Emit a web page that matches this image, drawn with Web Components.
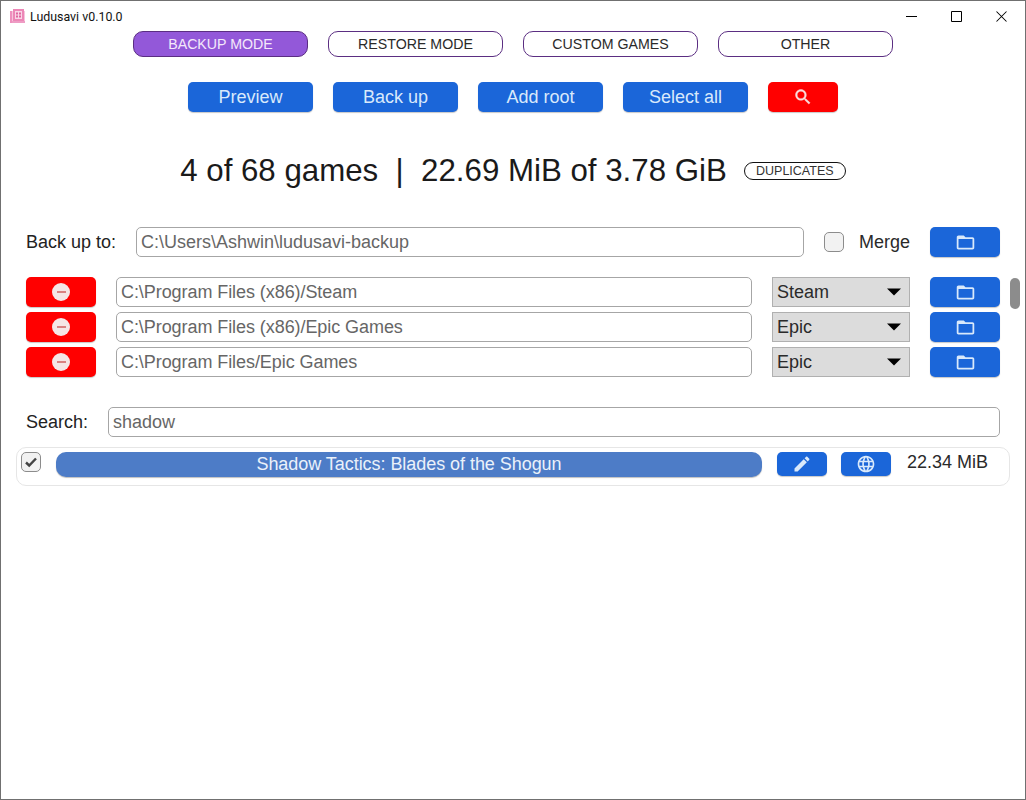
<!DOCTYPE html>
<html>
<head>
<meta charset="utf-8">
<title>Ludusavi</title>
<style>
html, body { margin: 0; padding: 0; background: #fff; }
</style>
</head>
<body>
<ls-window>
    <ls-titlebar>Ludusavi v0.10.0</ls-titlebar>
    <ls-row class="modes" gap="20" center>
        <ls-mode active>BACKUP MODE</ls-mode>
        <ls-mode>RESTORE MODE</ls-mode>
        <ls-mode>CUSTOM GAMES</ls-mode>
        <ls-mode>OTHER</ls-mode>
    </ls-row>
    <ls-row gap="20" center top="25">
        <ls-button width="125">Preview</ls-button>
        <ls-button width="125">Back up</ls-button>
        <ls-button width="125">Add root</ls-button>
        <ls-button width="125">Select all</ls-button>
        <ls-button width="70" color="red"><ls-icon name="search" size="20"></ls-icon></ls-button>
    </ls-row>
    <ls-summary top="39">4 of 68 games &nbsp;|&nbsp; 22.69 MiB of 3.78 GiB</ls-summary>
    <ls-row gap="20" top="36" pad="25">
        <ls-label width="90">Back up to:</ls-label>
        <ls-field grow>C:\Users\Ashwin\ludusavi-backup</ls-field>
        <ls-check>Merge</ls-check>
        <ls-button width="70"><ls-icon name="folder" size="21"></ls-icon></ls-button>
    </ls-row>
    <ls-roots>
        <ls-root-row kind="Steam">C:\Program Files (x86)/Steam</ls-root-row>
        <ls-root-row kind="Epic">C:\Program Files (x86)/Epic Games</ls-root-row>
        <ls-root-row kind="Epic">C:\Program Files/Epic Games</ls-root-row>
    </ls-roots>
    <ls-row gap="20" top="30" pad="25">
        <ls-label width="62">Search:</ls-label>
        <ls-field grow>shadow</ls-field>
    </ls-row>
    <ls-game size="22.34 MiB">Shadow Tactics: Blades of the Shogun</ls-game>
</ls-window>

<script>
const FONT = '"Liberation Sans", Arial, sans-serif';

const ICONS = {
    search: "M15.5 14h-.79l-.28-.27C15.41 12.59 16 11.11 16 9.5 16 5.91 13.09 3 9.5 3S3 5.91 3 9.5 5.91 16 9.5 16c1.61 0 3.09-.59 4.23-1.57l.27.28v.79l5 4.99L20.49 19l-4.99-5zm-6 0C7.01 14 5 11.99 5 9.5S7.01 5 9.5 5 14 7.01 14 9.5 11.99 14 9.5 14z",
    folder: "M20 6h-8l-2-2H4c-1.1 0-1.99.9-1.99 2L2 18c0 1.1.9 2 2 2h16c1.1 0 2-.9 2-2V8c0-1.1-.9-2-2-2zm0 12H4V8h16v10z",
    edit: "M3 17.25V21h3.75L17.81 9.94l-3.75-3.75L3 17.25zM20.71 7.04c.39-.39.39-1.02 0-1.41l-2.34-2.34c-.39-.39-1.02-.39-1.41 0l-1.83 1.83 3.75 3.75 1.83-1.83z",
    globe: "M11.99 2C6.47 2 2 6.48 2 12s4.47 10 9.99 10C17.52 22 22 17.52 22 12S17.52 2 11.99 2zm6.93 6h-2.95c-.32-1.25-.78-2.45-1.38-3.56 1.84.63 3.37 1.91 4.33 3.56zM12 4.04c.83 1.2 1.48 2.53 1.91 3.96h-3.82c.43-1.43 1.08-2.76 1.91-3.96zM4.26 14C4.1 13.36 4 12.69 4 12s.1-1.36.26-2h3.38c-.08.66-.14 1.32-.14 2 0 .68.06 1.34.14 2H4.26zm.82 2h2.95c.32 1.25.78 2.45 1.38 3.56-1.84-.63-3.37-1.9-4.33-3.56zm2.95-8H5.08c.96-1.66 2.49-2.93 4.33-3.56C8.81 5.55 8.35 6.75 8.03 8zM12 19.96c-.83-1.2-1.48-2.53-1.91-3.96h3.82c-.43 1.43-1.08 2.76-1.91 3.96zM14.34 14H9.66c-.09-.66-.16-1.32-.16-2 0-.68.07-1.35.16-2h4.68c.09.65.16 1.32.16 2 0 .68-.07 1.34-.16 2zm.25 5.56c.6-1.11 1.06-2.31 1.38-3.56h2.95c-.96 1.65-2.49 2.93-4.33 3.56zM16.36 14c.08-.66.14-1.32.14-2 0-.68-.06-1.34-.14-2h3.38c.16.64.26 1.31.26 2s-.1 1.36-.26 2h-3.38z"
};

// small helper so each element below stays short
function shadow(el, html) {
    el.attachShadow({mode: "open"}).innerHTML = html;
    return el.shadowRoot;
}

class LsWindow extends HTMLElement {
    constructor() {
        super();
        shadow(this, `
<style>
:host { display: block; box-sizing: border-box; width: 1026px; height: 800px; border: 1px solid #707070; overflow: hidden;
        background: #fff; color: #000; font-family: ${FONT}; font-size: 18px; }
</style>
<slot></slot>`);
    }
}

class LsTitlebar extends HTMLElement {
    constructor() {
        super();
        shadow(this, `
<style>
:host { display: flex; align-items: center; height: 30px; padding-right: 1px; font: 12.4px Roboto, sans-serif; color: #111; }
.logo { margin-left: 9px; width: 15px; height: 15px; }
.title { margin-left: 5px; flex: 1; }
.ctl { width: 45px; height: 30px; display: flex; align-items: center; justify-content: center; }
svg { display: block; }
</style>
<svg class="logo" viewBox="0 0 15 15">
    <rect x="0" y="2" width="15" height="12" fill="#f7c3dc"/>
    <rect x="0" y="2" width="2" height="12" fill="#ee8fbd"/>
    <rect x="2" y="12" width="13" height="2" fill="#ee9cc4"/>
    <rect x="3" y="0" width="11" height="12" fill="#ec86b6"/>
    <rect x="5" y="2" width="7" height="8" fill="#f9d5e6"/>
    <rect x="6" y="3.5" width="2" height="2" fill="#e0649f"/><rect x="9" y="3.5" width="2" height="2" fill="#e0649f"/>
    <rect x="6" y="6.5" width="2" height="2" fill="#e0649f"/><rect x="9" y="6.5" width="2" height="2" fill="#e0649f"/>
</svg>
<span class="title"><slot></slot></span>
<span class="ctl"><svg width="11" height="11" viewBox="0 0 11 11"><path d="M0 5.5h11" stroke="#000"/></svg></span>
<span class="ctl"><svg width="11" height="11" viewBox="0 0 11 11"><path d="M.5.5h10v10H.5z" fill="none" stroke="#000"/></svg></span>
<span class="ctl"><svg width="11" height="11" viewBox="0 0 11 11"><path d="M.5.5l10 10M10.5.5l-10 10" stroke="#000" stroke-width="1.05"/></svg></span>`);
    }
}

class LsRow extends HTMLElement {
    constructor() {
        super();
        shadow(this, `
<style>
:host { display: flex; align-items: center; }
</style>
<slot></slot>`);
    }
    connectedCallback() {
        this.style.gap = (this.getAttribute("gap") || 0) + "px";
        this.style.marginTop = (this.getAttribute("top") || 0) + "px";
        const pad = this.getAttribute("pad") || 0;
        this.style.padding = `0 ${pad}px`;
        if (this.hasAttribute("center")) this.style.justifyContent = "center";
    }
}

class LsMode extends HTMLElement {
    constructor() {
        super();
        shadow(this, `
<style>
:host { display: flex; align-items: center; justify-content: center; box-sizing: border-box; width: 175px; height: 26px;
        border: 1px solid #5b2e82; border-radius: 10px; font-size: 14.2px; color: #2a2a2a; background: #fff; }
:host([active]) { background: #9358d9; color: #f4e8fb; }
</style>
<slot></slot>`);
    }
}

class LsButton extends HTMLElement {
    constructor() {
        super();
        shadow(this, `
<style>
:host { display: flex; align-items: center; justify-content: center; box-sizing: border-box; height: 30px; flex: none;
        border-radius: 5px; background: #1b66d9; color: #d9e9fb; font-size: 18px; box-shadow: 0 1px 1px rgba(0,0,0,.22); }
:host([color=red]) { background: #ff0000; color: #f9dede; }
</style>
<slot></slot>`);
    }
    connectedCallback() {
        this.style.width = this.getAttribute("width") + "px";
    }
}

class LsIcon extends HTMLElement {
    constructor() {
        super();
        this.attachShadow({mode: "open"});
    }
    connectedCallback() {
        const size = this.getAttribute("size") || 18;
        const name = this.getAttribute("name");
        const bold = name == "search" ? ' stroke="currentColor" stroke-width=".5"' : "";
        this.shadowRoot.innerHTML = `
<style>
:host { display: block; line-height: 0; }
svg { display: block; }
</style>
<svg width="${size}" height="${size}" viewBox="0 0 24 24"><path fill="currentColor"${bold} d="${ICONS[name]}"/></svg>`;
    }
}

class LsSummary extends HTMLElement {
    constructor() {
        super();
        shadow(this, `
<style>
:host { display: flex; align-items: center; justify-content: center; height: 40px; gap: 17px; font-size: 31.25px; color: #1a1a1a; }
.dup { display: flex; align-items: center; justify-content: center; box-sizing: border-box; width: 102px; height: 18px;
       border: 1px solid #111; border-radius: 9px; font-size: 12.5px; color: #333; }
</style>
<span><slot></slot></span>
<span class="dup">DUPLICATES</span>`);
    }
    connectedCallback() {
        this.style.marginTop = this.getAttribute("top") + "px";
    }
}

class LsLabel extends HTMLElement {
    constructor() {
        super();
        shadow(this, `
<style>
:host { display: block; flex: none; font-size: 18px; color: #222; white-space: nowrap; }
</style>
<slot></slot>`);
    }
    connectedCallback() {
        this.style.width = this.getAttribute("width") + "px";
    }
}

class LsField extends HTMLElement {
    constructor() {
        super();
        shadow(this, `
<style>
:host { display: flex; align-items: center; box-sizing: border-box; height: 30px; padding: 0 4px; min-width: 0;
        border: 1px solid #a6a6a6; border-radius: 5px; background: #fff; font-size: 18px; color: #666; white-space: nowrap; }
:host([grow]) { flex: 1; }
</style>
<slot></slot>`);
    }
}

class LsCheck extends HTMLElement {
    constructor() {
        super();
        shadow(this, `
<style>
:host { display: flex; align-items: center; gap: 15px; font-size: 18px; color: #2a2a2a; }
.box { box-sizing: border-box; width: 20px; height: 20px; border: 1px solid #8c8c8c; border-radius: 5px; background: #f2f2f2;
       display: flex; align-items: center; justify-content: center; }
svg { display: block; }
.box:not(.on) svg { display: none; }
</style>
<span class="box"><svg width="14" height="14" viewBox="0 0 14 14"><path d="M2 7.5l3.2 3L12 3.5" fill="none" stroke="#444" stroke-width="2.4"/></svg></span>
<slot></slot>`);
    }
    connectedCallback() {
        if (this.hasAttribute("checked")) this.shadowRoot.querySelector(".box").classList.add("on");
    }
}

class LsSelect extends HTMLElement {
    constructor() {
        super();
        shadow(this, `
<style>
:host { display: flex; align-items: center; justify-content: space-between; box-sizing: border-box; width: 138px; height: 30px; flex: none;
        padding: 0 8px 0 4px; border: 1px solid #b0b0b0; background: #dcdcdc; font-size: 18px; color: #2a2a2a; }
svg { display: block; }
</style>
<slot></slot>
<svg width="14" height="8" viewBox="0 0 14 8"><path d="M0 .5h14L7 7.5z" fill="#000"/></svg>`);
    }
}

class LsRootRow extends HTMLElement {
    constructor() {
        super();
        shadow(this, `
<style>
:host { display: flex; align-items: center; gap: 20px; }
.minus { width: 18px; height: 18px; border-radius: 50%; background: #f5e6e6; display: flex; align-items: center; justify-content: center; }
.minus i { display: block; width: 9px; height: 2px; background: #d98282; }
ls-field { letter-spacing: -.07px; }
</style>
<ls-button width="70" color="red"><span class="minus"><i></i></span></ls-button>
<ls-field grow><slot></slot></ls-field>
<ls-select></ls-select>
<ls-button width="70"><ls-icon name="folder" size="21"></ls-icon></ls-button>`);
    }
    connectedCallback() {
        this.shadowRoot.querySelector("ls-select").textContent = this.getAttribute("kind");
    }
}

class LsRoots extends HTMLElement {
    constructor() {
        super();
        shadow(this, `
<style>
:host { display: flex; margin-top: 20px; padding-left: 25px; padding-right: 5px; gap: 10px; }
.list { flex: 1; display: flex; flex-direction: column; gap: 5px; }
.bar { width: 10px; }
.thumb { width: 10px; height: 31px; margin-top: 1px; border-radius: 5px; background: #8c8c8c; }
</style>
<div class="list"><slot></slot></div>
<div class="bar"><div class="thumb"></div></div>`);
    }
}

class LsGame extends HTMLElement {
    constructor() {
        super();
        shadow(this, `
<style>
:host { display: flex; align-items: flex-start; box-sizing: border-box; height: 39px; margin: 10px 15px 0 15px; padding: 4px 4px;
        border: 1px solid #e6e6e6; border-radius: 10px; }
.name { flex: 1; display: flex; align-items: center; justify-content: center; height: 25px; margin: 0 15px; border-radius: 10px;
        background: #4d7cc7; color: #eaf1fa; font-size: 18px; letter-spacing: -.05px; box-shadow: 0 1px 1px rgba(0,0,0,.25); }
ls-button { height: 24px; }
.size { width: 80px; margin: 0 18px 0 16px; font-size: 18px; color: #2a2a2a; white-space: nowrap; line-height: 21px; }
</style>
<ls-check checked></ls-check>
<div class="name"><slot></slot></div>
<ls-button width="50" style="margin-right:14px"><ls-icon name="edit" size="20"></ls-icon></ls-button>
<ls-button width="50"><ls-icon name="globe" size="20"></ls-icon></ls-button>
<div class="size"></div>`);
    }
    connectedCallback() {
        this.shadowRoot.querySelector(".size").textContent = this.getAttribute("size");
    }
}

customElements.define("ls-window", LsWindow);
customElements.define("ls-titlebar", LsTitlebar);
customElements.define("ls-row", LsRow);
customElements.define("ls-mode", LsMode);
customElements.define("ls-button", LsButton);
customElements.define("ls-icon", LsIcon);
customElements.define("ls-summary", LsSummary);
customElements.define("ls-label", LsLabel);
customElements.define("ls-field", LsField);
customElements.define("ls-check", LsCheck);
customElements.define("ls-select", LsSelect);
customElements.define("ls-root-row", LsRootRow);
customElements.define("ls-roots", LsRoots);
customElements.define("ls-game", LsGame);
</script>
</body>
</html>
